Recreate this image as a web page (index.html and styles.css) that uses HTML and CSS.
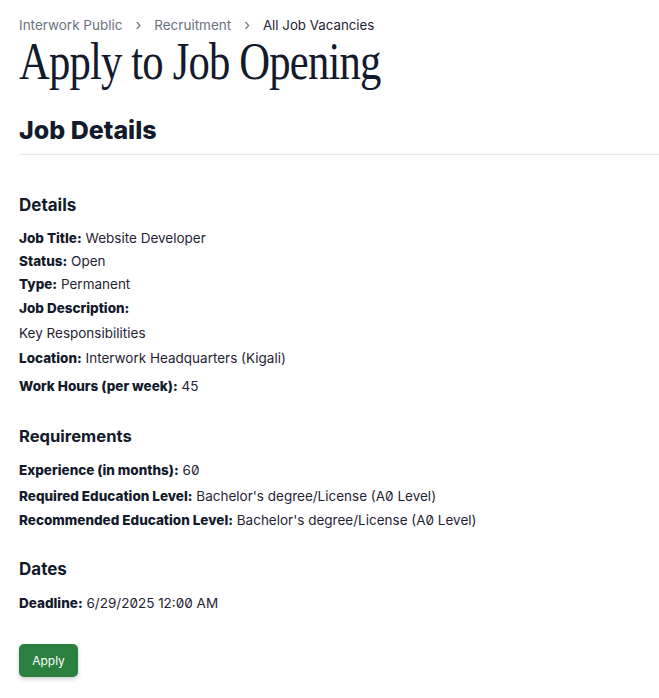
FILE: index.html
```html
<!DOCTYPE html>
<html lang="en">
<head>
<meta charset="utf-8">
<title>Apply to Job Opening</title>
<link rel="stylesheet" href="styles.css">
</head>
<body>
<main class="page">
  <nav class="crumbs">
    <span class="crumb">Interwork Public</span>
    <span class="sep">›</span>
    <span class="crumb">Recruitment</span>
    <span class="sep">›</span>
    <span class="crumb current">All Job Vacancies</span>
  </nav>
  <h1 class="title">Apply to Job Opening</h1>
  <h2 class="section-title">Job Details</h2>
  <hr class="rule">

  <section class="group group-details">
    <h3 class="group-title">Details</h3>
    <p class="row row-tight"><b>Job Title:</b> Website Developer</p>
    <p class="row row-tight"><b>Status:</b> Open</p>
    <p class="row row-tight"><b>Type:</b> Permanent</p>
    <p class="row"><b>Job Description:</b></p>
    <p class="row">Key Responsibilities</p>
    <p class="row"><b>Location:</b> Interwork Headquarters (Kigali)</p>
    <p class="row row-last"><b>Work Hours (per week):</b> 45</p>
  </section>

  <section class="group group-req">
    <h3 class="group-title">Requirements</h3>
    <p class="row row-first"><b>Experience (in months):</b> 60</p>
    <p class="row row-wide"><b>Required Education Level:</b> Bachelor's degree/License (A0 Level)</p>
    <p class="row row-tight"><b>Recommended Education Level:</b> Bachelor's degree/License (A0 Level)</p>
  </section>

  <section class="group group-dates">
    <h3 class="group-title">Dates</h3>
    <p class="row"><b>Deadline:</b> 6/29/2025 12:00 AM</p>
  </section>

  <button class="apply" type="button">Apply</button>
</main>
</body>
</html>
```

FILE: styles.css
```css
html, body {
  margin: 0;
  padding: 0;
  background: #ffffff;
}

body {
  font-family: Inter, "Noto Sans", sans-serif;
  font-feature-settings: "zero" 1;
  color: #1f2433;
}

.page {
  padding: 16px 0 20px 19px;
}

.crumbs {
  display: flex;
  align-items: center;
  gap: 13px;
  font-size: 13.5px;
  line-height: 18px;
  color: #6b7280;
}

.sep {
  font-size: 15px;
  color: #6b7280;
}

.crumb.current {
  color: #1f2433;
  font-size: 13.3px;
}

.title {
  margin: 0;
  font-family: "Liberation Serif", "Times New Roman", serif;
  font-weight: 400;
  font-size: 52px;
  line-height: 56px;
  letter-spacing: -1px;
  color: #131a2b;
  transform: scaleX(0.82);
  transform-origin: left center;
  white-space: nowrap;
}

.section-title {
  margin: 25px 0 0;
  font-size: 25px;
  line-height: 30px;
  font-weight: 800;
  letter-spacing: 0;
  color: #131a2b;
}

.rule {
  margin: 9px 0 0;
  border: 0;
  border-top: 1px solid #e6e7ea;
}

.group-details {
  margin-top: 38px;
}

.group-req {
  margin-top: 25px;
}

.group-dates {
  margin-top: 25px;
}

.group-title {
  margin: 0 0 10px;
  font-size: 17px;
  line-height: 24px;
  font-weight: 700;
  color: #131a2b;
}

.group-req .group-title {
  font-size: 16.6px;
}

.row {
  margin: 0;
  font-size: 13.5px;
  line-height: 25px;
  color: #1f2433;
}

.row-tight {
  line-height: 23px;
}

.row-last {
  margin-top: 3px;
}

.row-first {
  margin-top: 3px;
}

.row-wide {
  line-height: 26px;
}

.row b {
  font-weight: 800;
  color: #131a2b;
}

.apply {
  display: block;
  margin-top: 28px;
  width: 59px;
  height: 33px;
  border: 0;
  border-radius: 5px;
  background: #2b8040;
  color: #ffffff;
  font-family: Inter, "Noto Sans", sans-serif;
  font-size: 12px;
  box-shadow: 0 2px 4px rgba(0, 0, 0, 0.2);
  cursor: pointer;
}
```
